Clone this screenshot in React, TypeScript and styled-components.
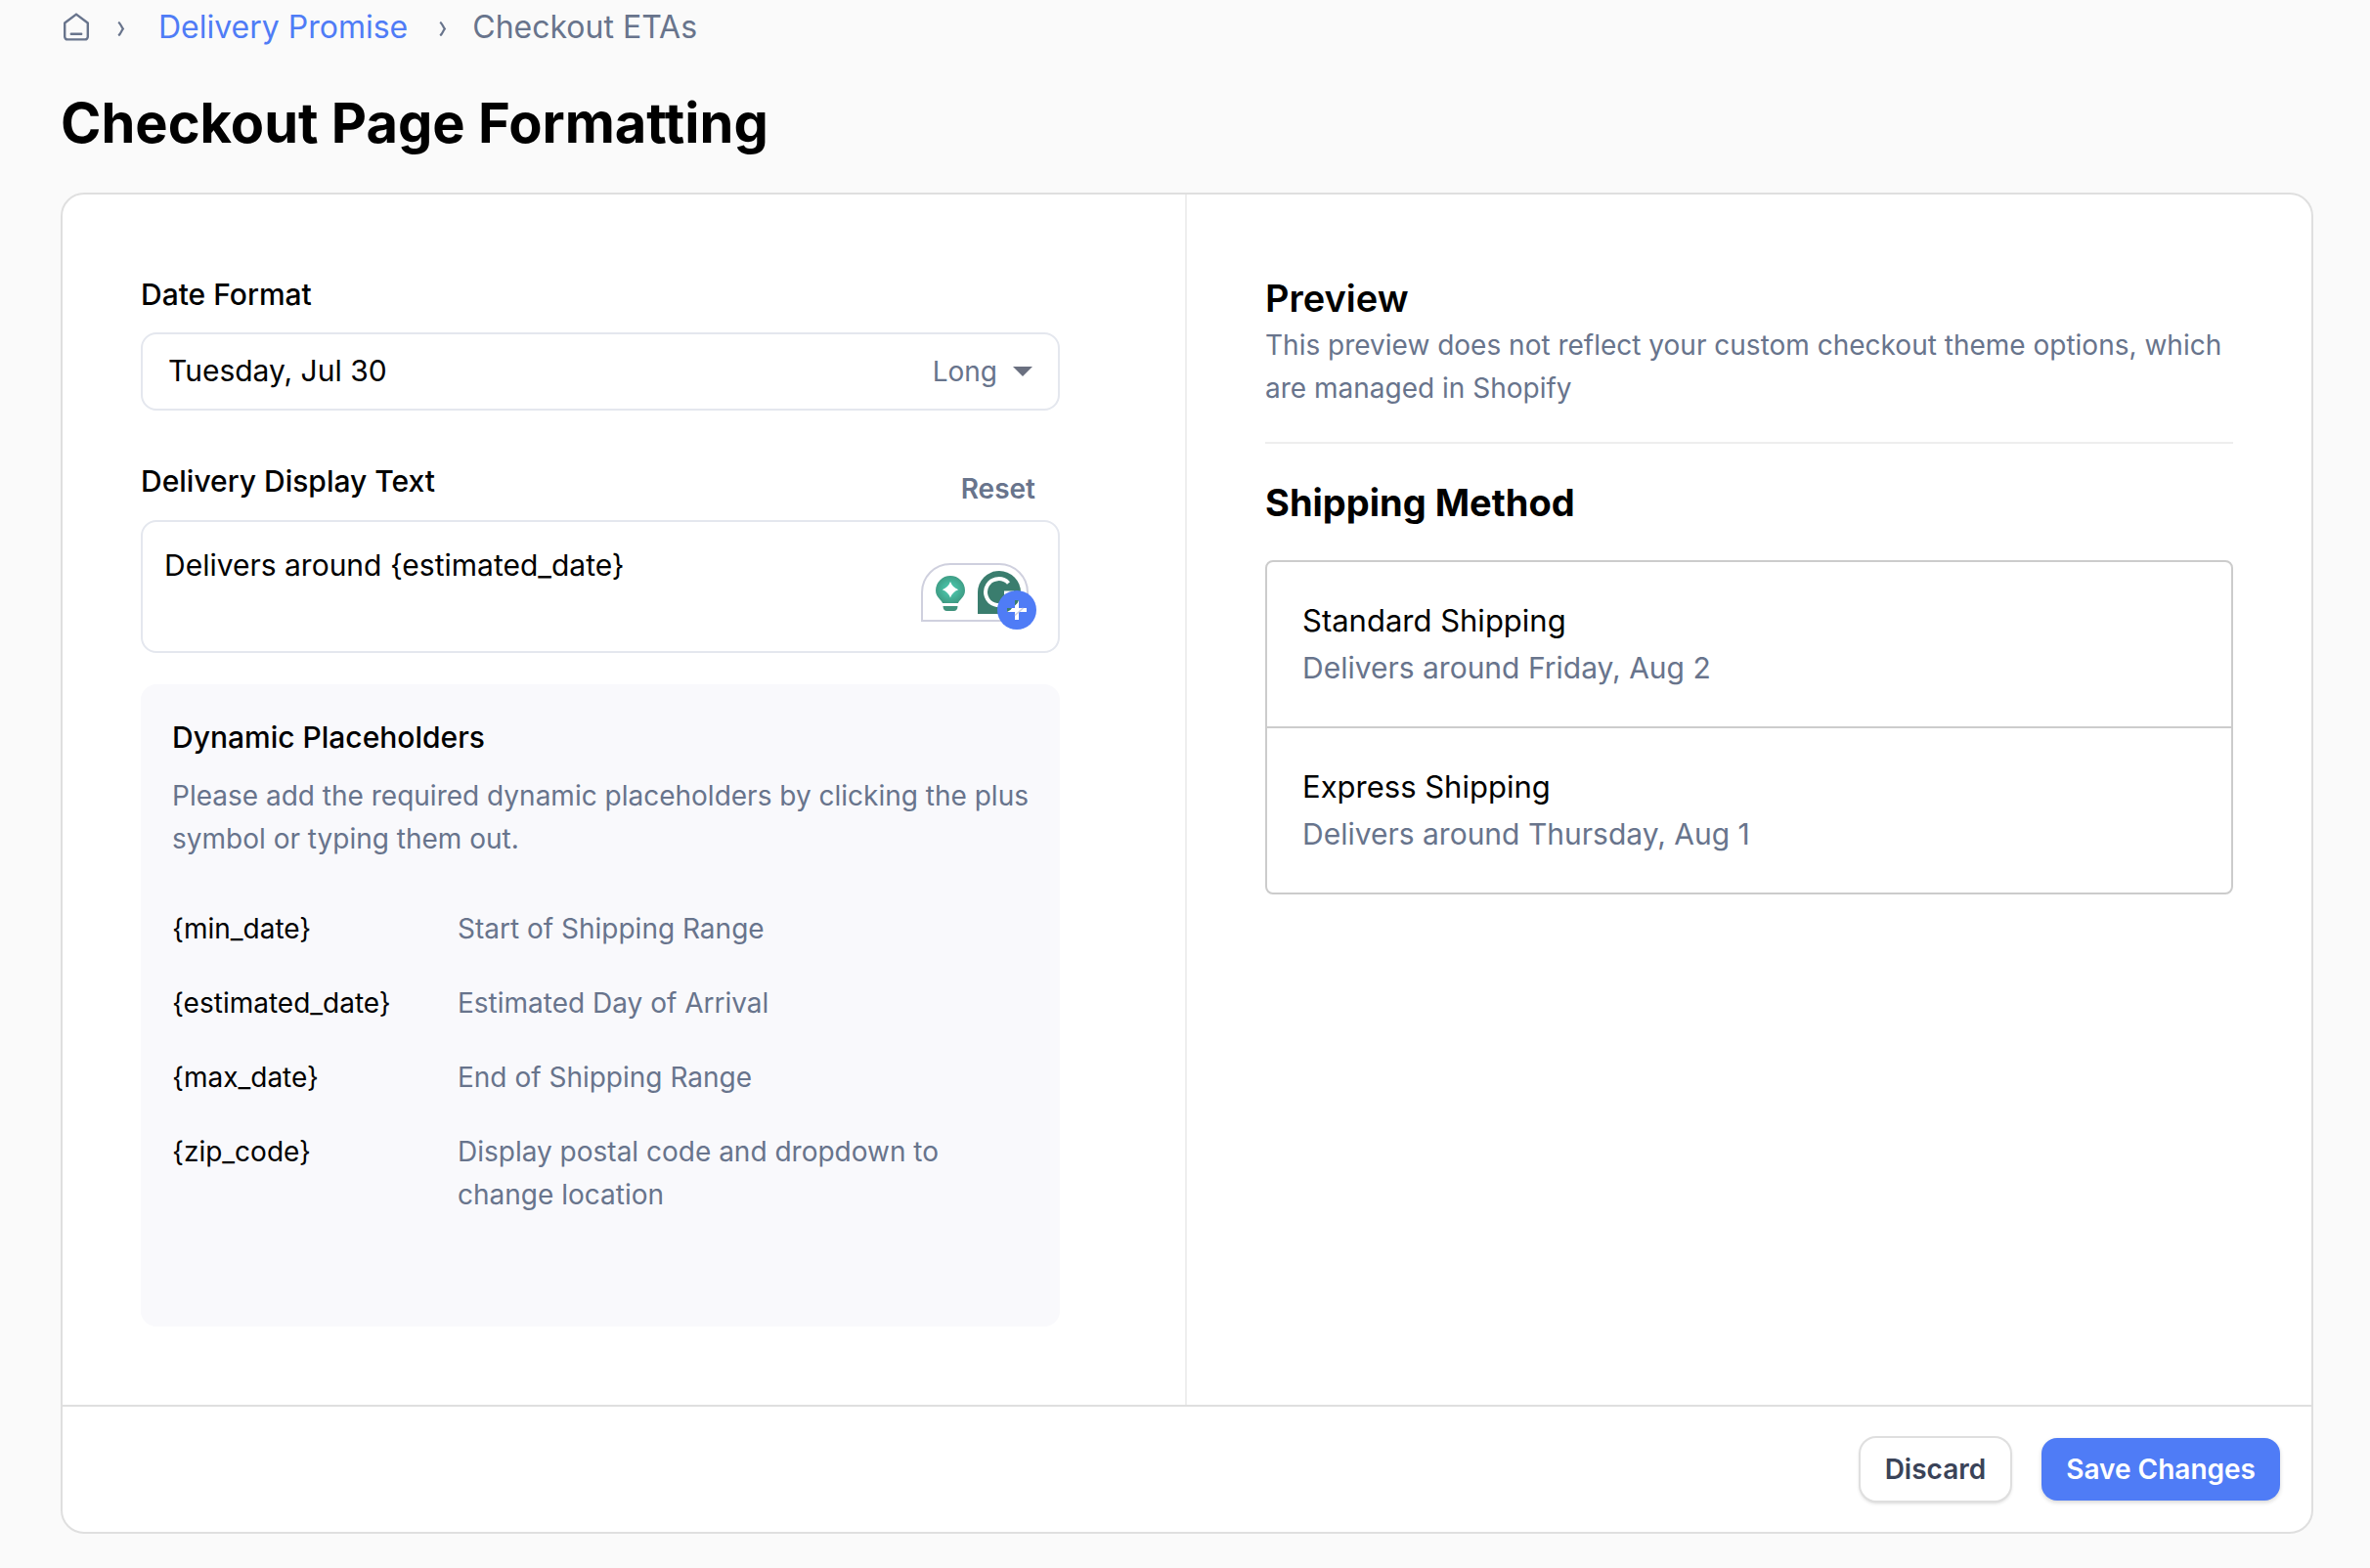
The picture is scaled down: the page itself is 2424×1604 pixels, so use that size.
import React, { useState } from "react";
import styled, { createGlobalStyle } from "styled-components";

const GlobalStyle = createGlobalStyle`
  *, *::before, *::after { box-sizing: border-box; }
  body {
    margin: 0;
    background: #fafafa;
    color: #000;
    font-family: Inter, "Liberation Sans", sans-serif;
    font-size: 28px;
    line-height: 44px;
  }
  h1, h2, h3, p, ol, ul, dl, dd { margin: 0; padding: 0; }
  button, select, textarea { font-family: inherit; }
`;

const Page = styled.main`
  padding: 4px 58px 32px 62px;
`;

const Breadcrumbs = styled.ol`
  display: flex;
  align-items: center;
  list-style: none;
  font-size: 32px;
  line-height: 48px;
  color: #68748c;
`;

const Crumb = styled.li`
  display: flex;
  align-items: center;
`;

const CrumbLink = styled.a`
  display: flex;
  color: #4f7cf6;
  text-decoration: none;
`;

const HomeLink = styled(CrumbLink)`
  color: #68748c;
`;

const Separator = styled.span<{ $before: number; $after: number }>`
  display: flex;
  margin-left: ${(p) => p.$before}px;
  margin-right: ${(p) => p.$after}px;
`;

const Title = styled.h1`
  margin-top: 40px;
  font-size: 56px;
  line-height: 68px;
  font-weight: 700;
`;

const Card = styled.form`
  margin-top: 37px;
  border: 2px solid #dfdfdf;
  border-radius: 24px;
  background: #fff;
`;

const Columns = styled.div`
  display: grid;
  grid-template-columns: 1fr 1fr;
`;

const Settings = styled.section`
  padding: 80px 128px 80px 80px;
  border-right: 2px solid #eee;
`;

const Preview = styled.section`
  padding: 80px;
`;

const Label = styled.label`
  display: block;
  padding-bottom: 16px;
  font-size: 30px;
  line-height: 45px;
  font-weight: 500;
`;

const SelectBox = styled.div`
  position: relative;
  display: grid;
  grid-template-columns: 1fr auto;
  align-items: center;
  margin-bottom: 48px;
`;

const Select = styled.select`
  grid-area: 1 / 1 / 2 / 3;
  width: 100%;
  height: 80px;
  padding: 0 26px 2px;
  appearance: none;
  border: 2px solid #e4e7ee;
  border-radius: 16px;
  background: #fff;
  color: #000;
  font-size: 30px;
`;

const SelectHint = styled.span`
  grid-area: 1 / 2 / 2 / 3;
  display: flex;
  align-items: center;
  gap: 16px;
  padding-right: 28px;
  color: #68748c;
  pointer-events: none;
`;

const FieldHeader = styled.div`
  display: flex;
  justify-content: space-between;
  align-items: center;
`;

const Button = styled.button<{ $kind: "plain" | "outline" | "primary" }>`
  height: 64px;
  padding: 0 25px;
  border: 0;
  border-radius: 16px;
  font-size: 28px;
  line-height: 44px;
  font-weight: 600;
  cursor: pointer;
  background: ${(p) => (p.$kind === "primary" ? "#4f7cf6" : p.$kind === "outline" ? "#fff" : "none")};
  color: ${(p) => (p.$kind === "primary" ? "#fff" : p.$kind === "outline" ? "#3a4358" : "#68748c")};
  box-shadow: ${(p) =>
    p.$kind === "primary"
      ? "0 2px 4px rgba(0, 0, 0, 0.16)"
      : p.$kind === "outline"
        ? "0 0 0 2px #dfdfdf, 0 2px 4px rgba(0, 0, 0, 0.24)"
        : "none"};
`;

const TextBox = styled.div`
  position: relative;
  display: flex;
`;

const TextArea = styled.textarea`
  width: 100%;
  height: 136px;
  padding: 20px 22px;
  resize: none;
  border: 2px solid #e4e7ee;
  border-radius: 16px;
  color: #000;
  font-size: 30px;
  line-height: 48px;
`;

const Assistant = styled.div`
  position: absolute;
  right: 32px;
  bottom: 32px;
  display: flex;
`;

const AddButton = styled.button`
  position: absolute;
  right: 24px;
  bottom: 24px;
  display: flex;
  width: 40px;
  height: 40px;
  padding: 0;
  border: 0;
  border-radius: 50%;
  background: none;
  cursor: pointer;
`;

const Placeholders = styled.section`
  margin-top: 32px;
  padding: 32px 32px 113px;
  border-radius: 16px;
  background: #f9f9fc;
`;

const PlaceholdersTitle = styled.h3`
  margin-bottom: 15px;
  font-size: 30px;
  line-height: 45px;
  font-weight: 500;
`;

const Muted = styled.p`
  color: #68748c;
`;

const PlaceholderList = styled.dl`
  display: grid;
  grid-template-columns: 1fr 2fr;
  row-gap: 32px;
  margin-top: 48px;
`;

const Description = styled.dd`
  color: #68748c;
`;

const PreviewTitle = styled.h2<{ $strong?: boolean }>`
  font-size: 38px;
  line-height: 52px;
  font-weight: ${(p) => (p.$strong ? 700 : 600)};
`;

const PreviewIntro = styled.div`
  margin-bottom: 34px;
  padding-bottom: 33px;
  border-bottom: 2px solid #eee;
`;

const Methods = styled.ul`
  margin-top: 33px;
  list-style: none;
  border: 2px solid #ccc;
  border-radius: 8px;
  line-height: 48px;
`;

const Method = styled.li`
  padding: 36px;
  & + & { border-top: 2px solid #ccc; }
`;

const MethodName = styled.p`
  font-size: 31px;
`;

const MethodEta = styled(Muted)`
  font-size: 30px;
`;

const Footer = styled.footer`
  display: flex;
  justify-content: flex-end;
  gap: 32px;
  padding: 32px;
  border-top: 2px solid #dfdfdf;
`;

const HomeIcon = () => (
  <svg width="32" height="32" viewBox="0 0 32 32" fill="none" stroke="currentColor" strokeWidth="2.4" strokeLinecap="round" strokeLinejoin="round">
    <path d="M4.200 11.500 16 2.600l11.800 8.900V25.600a2.800 2.800 0 0 1-2.800 2.800H7a2.800 2.800 0 0 1-2.800-2.800zM10.800 22.700h10.400" />
  </svg>
);

const ChevronIcon = () => (
  <svg width="8" height="18" viewBox="0 0 8 18" fill="none" stroke="currentColor" strokeWidth="2.200">
    <path d="M1.200 3.600C3.500 5.500 3.800 8 5.800 10.500 3.800 13 3.500 15.500 1.200 17.400" />
  </svg>
);

const CaretIcon = () => (
  <svg width="20" height="10" viewBox="0 0 20 10">
    <path d="M0 0h20L10 10z" fill="#6a7080" />
  </svg>
);

const AssistantIcon = () => (
  <svg width="110" height="60" viewBox="0 0 110 60" fill="none">
    <defs>
      <radialGradient id="bulb" cx="0.5" cy="0.5" r="0.55">
        <stop offset="0.3" stopColor="#4ac0a6" />
        <stop offset="1" stopColor="#3d9880" />
      </radialGradient>
    </defs>
    <path d="M1 59V30A29 29 0 0 1 30 1h50a29 29 0 0 1 0 58z" fill="#fff" stroke="#cfd0de" strokeWidth="2" />
    <path d="M30 13a15 15 0 0 1 15 15c0 7-6 9.500-7 13H22c-1-3.500-7-6-7-13a15 15 0 0 1 15-15z" fill="url(#bulb)" />
    <path d="M22.500 44h15c0 3.200-1.500 5-4 5h-7c-2.500 0-4-1.800-4-5z" fill="#3f937c" />
    <path d="M30 19q2.200 6 8.200 8.200-6 2.200-8.200 8.200-2.200-6-8.200-8.200 6-2.200 8.200-8.200z" fill="#fff" />
    <path d="M58 52V30a22 22 0 1 1 22 22z" fill="#3a7d6e" />
    <path d="M89.500 20.500A13.500 13.500 0 1 0 93 30.500H85" stroke="#fff" strokeWidth="4" />
  </svg>
);

const PlusIcon = () => (
  <svg width="40" height="40" viewBox="0 0 40 40">
    <circle cx="20" cy="20" r="20" fill="#4f7cf6" />
    <path d="M18 10h4v8h8v4h-8v8h-4v-8h-8v-4h8z" fill="#fff" />
    <path d="M10 18h5q-1 2.500-5 4zM18 10h4q-.5 2.500-4 5.500z" fill="#3a7d6e" />
    <path d="M22 22 26.500 18" stroke="#cfd0de" strokeWidth="1.600" />
    <path d="M18 25.500 22 22" stroke="#cfd0de" strokeWidth="1.600" />
  </svg>
);

const placeholders = [
  ["{min_date}", "Start of Shipping Range"],
  ["{estimated_date}", "Estimated Day of Arrival"],
  ["{max_date}", "End of Shipping Range"],
  ["{zip_code}", "Display postal code and dropdown to change location"],
];

const methods = [
  ["Standard Shipping", "Delivers around Friday, Aug 2"],
  ["Express Shipping", "Delivers around Thursday, Aug 1"],
];

const defaultText = "Delivers around {estimated_date}";

export default function App() {
  const [text, setText] = useState(defaultText);
  return (
    <Page>
      <GlobalStyle />
      <nav aria-label="Breadcrumb">
        <Breadcrumbs>
          <Crumb>
            <HomeLink href="#home" aria-label="Home"><HomeIcon /></HomeLink>
            <Separator $before={26} $after={34}><ChevronIcon /></Separator>
          </Crumb>
          <Crumb>
            <CrumbLink href="#delivery-promise">Delivery Promise</CrumbLink>
            <Separator $before={32} $after={26}><ChevronIcon /></Separator>
          </Crumb>
          <Crumb aria-current="page">Checkout ETAs</Crumb>
        </Breadcrumbs>
      </nav>
      <Title>Checkout Page Formatting</Title>
      <Card onSubmit={(e) => e.preventDefault()}>
        <Columns>
          <Settings>
            <Label htmlFor="date-format">Date Format</Label>
            <SelectBox>
              <Select id="date-format">
                <option>Tuesday, Jul 30</option>
              </Select>
              <SelectHint>Long<CaretIcon /></SelectHint>
            </SelectBox>
            <FieldHeader>
              <Label htmlFor="display-text">Delivery Display Text</Label>
              <Button type="button" $kind="plain" onClick={() => setText(defaultText)}>Reset</Button>
            </FieldHeader>
            <TextBox>
              <TextArea id="display-text" spellCheck={false} value={text} onChange={(e) => setText(e.target.value)} />
              <Assistant><AssistantIcon /></Assistant>
              <AddButton type="button" aria-label="Add placeholder"><PlusIcon /></AddButton>
            </TextBox>
            <Placeholders>
              <PlaceholdersTitle>Dynamic Placeholders</PlaceholdersTitle>
              <Muted>Please add the required dynamic placeholders by clicking the plus symbol or typing them out.</Muted>
              <PlaceholderList>
                {placeholders.map(([name, description]) => (
                  <React.Fragment key={name}>
                    <dt>{name}</dt>
                    <Description>{description}</Description>
                  </React.Fragment>
                ))}
              </PlaceholderList>
            </Placeholders>
          </Settings>
          <Preview>
            <PreviewIntro>
              <PreviewTitle>Preview</PreviewTitle>
              <Muted>This preview does not reflect your custom checkout theme options, which are managed in Shopify</Muted>
            </PreviewIntro>
            <PreviewTitle as="h3" $strong>Shipping Method</PreviewTitle>
            <Methods>
              {methods.map(([name, eta]) => (
                <Method key={name}>
                  <MethodName>{name}</MethodName>
                  <MethodEta>{eta}</MethodEta>
                </Method>
              ))}
            </Methods>
          </Preview>
        </Columns>
        <Footer>
          <Button type="button" $kind="outline">Discard</Button>
          <Button type="submit" $kind="primary">Save Changes</Button>
        </Footer>
      </Card>
    </Page>
  );
}
